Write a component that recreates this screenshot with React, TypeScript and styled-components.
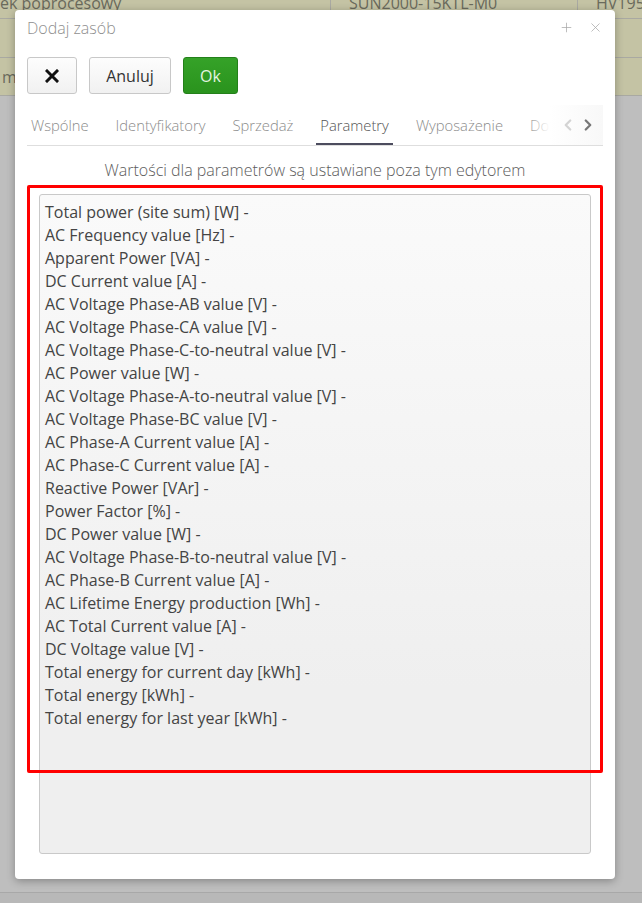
import React from "react";
import styled, { createGlobalStyle } from "styled-components";
import { ChevronLeft, ChevronRight, Plus, X } from "lucide-react";

const GlobalStyle = createGlobalStyle`
  html, body {
    margin: 0;
    height: 100%;
    overflow: hidden;
  }
  body {
    background: #bebebe;
    font-family: "Open Sans", "Liberation Sans", sans-serif;
  }
`;

const Page = styled.div`
  position: relative;
  width: 642px;
  height: 903px;
  overflow: hidden;
`;

const Backdrop = styled.div`
  display: flex;
  flex-direction: column;
  height: 100%;
`;

const Row = styled.div<{ $h: number; $tint?: boolean }>`
  display: flex;
  height: ${(p) => p.$h}px;
  background: ${(p) => (p.$tint ? "#c4c3a4" : "#bebebe")};
  border-bottom: 1px solid #a9a9a2;
  overflow: hidden;
  flex-shrink: 0;
`;

const Cell = styled.div<{ $w?: number; $shift?: number }>`
  box-sizing: border-box;
  width: ${(p) => (p.$w ? `${p.$w}px` : "auto")};
  flex: ${(p) => (p.$w ? "none" : 1)};
  padding: 0 2px 0 ${(p) => (p.$shift ?? 18)}px;
  margin-top: -8px;
  font-size: 16px;
  line-height: 22px;
  color: #6a6a5c;
  white-space: nowrap;
  border-right: 1px solid #a9a9a2;
  &:last-child {
    border-right: none;
  }
`;

const MidCell = styled(Cell)`
  margin-top: 0;
  align-self: center;
`;

const Filler = styled.div`
  flex: 1;
  border-bottom: 1px solid #a8a8a8;
`;

const Footer = styled.div`
  height: 10px;
  background: #b8b8b8;
`;

const Modal = styled.div`
  position: absolute;
  left: 15px;
  top: 10px;
  width: 600px;
  height: 869px;
  background: #fff;
  border-radius: 4px;
  box-shadow: 0 2px 8px rgba(0, 0, 0, 0.3);
  display: flex;
  flex-direction: column;
  padding: 0 12px;
  box-sizing: border-box;
`;

const Header = styled.div`
  display: flex;
  align-items: center;
  height: 35px;
`;

const Title = styled.div`
  flex: 1;
  font-size: 16px;
  font-weight: 300;
  color: #8f8f8f;
`;

const HeaderIcon = styled.span`
  display: flex;
  color: #a8a8a8;
  margin-left: 14px;
`;

const Toolbar = styled.div`
  display: flex;
  gap: 12px;
  height: 37px;
  margin-top: 12px;
`;

const Button = styled.button<{ $primary?: boolean; $w: number }>`
  width: ${(p) => p.$w}px;
  height: 37px;
  display: flex;
  align-items: center;
  justify-content: center;
  border-radius: 3px;
  font-family: inherit;
  font-size: 16px;
  cursor: pointer;
  border: 1px solid ${(p) => (p.$primary ? "#24801a" : "#c8c8c8")};
  background: ${(p) =>
    p.$primary
      ? "linear-gradient(#35a228, #2a931d)"
      : "linear-gradient(#fdfdfd, #f1f1f1)"};
  color: ${(p) => (p.$primary ? "#e4f4e0" : "#333")};
`;

const Tabs = styled.div`
  position: relative;
  display: flex;
  margin-top: 11px;
  height: 40px;
  border-bottom: 1px solid #dedede;
  overflow: hidden;
`;

const Tab = styled.div<{ $active?: boolean }>`
  flex: none;
  display: flex;
  align-items: center;
  padding: 2px 4px 0;
  margin-right: 19px;
  font-size: 14.75px;
  font-weight: 300;
  color: ${(p) => (p.$active ? "#555" : "#8c8c8c")};
  border-bottom: 2px solid ${(p) => (p.$active ? "#4c4c5e" : "transparent")};
`;

const TabArrows = styled.div`
  position: absolute;
  right: 0;
  top: 0;
  bottom: 0;
  width: 70px;
  display: flex;
  align-items: center;
  justify-content: flex-end;
  padding-right: 6px;
  gap: 2px;
  background: linear-gradient(to right, rgba(255, 255, 255, 0), #fff 30%, #f8f8f8);
`;

const Arrow = styled.span<{ $dim?: boolean }>`
  display: flex;
  color: ${(p) => (p.$dim ? "#d4d4d4" : "#777")};
`;

const Note = styled.div`
  margin-top: 13px;
  text-align: center;
  font-size: 16px;
  font-weight: 300;
  color: #5c5c5c;
  line-height: 22px;
`;

const Content = styled.div`
  position: relative;
  margin-top: 13px;
  padding: 0 12px;
`;

const TextArea = styled.div`
  height: 660px;
  box-sizing: border-box;
  border: 1px solid #c9c9c9;
  border-radius: 3px;
  background: linear-gradient(#fafafa, #efefef 75%);
  padding: 6px 5px;
`;

const Line = styled.div`
  font-size: 16px;
  line-height: 23px;
  color: #444;
  white-space: nowrap;
`;

const Highlight = styled.div`
  position: absolute;
  left: 0;
  right: 0;
  top: -9px;
  height: 588px;
  box-sizing: border-box;
  border: 3px solid #ff0000;
  border-radius: 2px;
  pointer-events: none;
`;

const params = [
  "Total power (site sum) [W] -",
  "AC Frequency value [Hz] -",
  "Apparent Power [VA] -",
  "DC Current value [A] -",
  "AC Voltage Phase-AB value [V] -",
  "AC Voltage Phase-CA value [V] -",
  "AC Voltage Phase-C-to-neutral value [V] -",
  "AC Power value [W] -",
  "AC Voltage Phase-A-to-neutral value [V] -",
  "AC Voltage Phase-BC value [V] -",
  "AC Phase-A Current value [A] -",
  "AC Phase-C Current value [A] -",
  "Reactive Power [VAr] -",
  "Power Factor [%] -",
  "DC Power value [W] -",
  "AC Voltage Phase-B-to-neutral value [V] -",
  "AC Phase-B Current value [A] -",
  "AC Lifetime Energy production [Wh] -",
  "AC Total Current value [A] -",
  "DC Voltage value [V] -",
  "Total energy for current day [kWh] -",
  "Total energy [kWh] -",
  "Total energy for last year [kWh] -",
];

const tabs = ["Wspólne", "Identyfikatory", "Sprzedaż", "Parametry", "Wyposażenie", "Do"];

const BoldX = () => (
  <svg width="14" height="14" viewBox="0 0 14 14">
    <path d="M2 2 L12 12 M12 2 L2 12" stroke="#111" strokeWidth="3" strokeLinecap="square" />
  </svg>
);

export default function App() {
  return (
    <Page>
      <GlobalStyle />
      <Backdrop>
        <Row $h={18} $tint>
          <Cell $w={331} $shift={0}>ek poprocesowy</Cell>
          <Cell $w={247}>SUN2000-15KTL-M0</Cell>
          <Cell>HV1950</Cell>
        </Row>
        <Row $h={38} $tint>
          <MidCell $w={331} $shift={0}></MidCell>
          <MidCell $w={247}></MidCell>
          <MidCell></MidCell>
        </Row>
        <Row $h={37} $tint>
          <MidCell $w={331} $shift={2}>m</MidCell>
          <MidCell $w={247}></MidCell>
          <MidCell></MidCell>
        </Row>
        <Filler />
        <Footer />
      </Backdrop>

      <Modal>
        <Header>
          <Title>Dodaj zasób</Title>
          <HeaderIcon>
            <Plus size={15} strokeWidth={1.2} />
          </HeaderIcon>
          <HeaderIcon>
            <X size={15} strokeWidth={1.2} />
          </HeaderIcon>
        </Header>

        <Toolbar>
          <Button $w={50}>
            <BoldX />
          </Button>
          <Button $w={82}>Anuluj</Button>
          <Button $w={55} $primary>
            Ok
          </Button>
        </Toolbar>

        <Tabs>
          {tabs.map((t) => (
            <Tab key={t} $active={t === "Parametry"}>
              {t}
            </Tab>
          ))}
          <TabArrows>
            <Arrow $dim>
              <ChevronLeft size={18} strokeWidth={3} />
            </Arrow>
            <Arrow>
              <ChevronRight size={18} strokeWidth={3} />
            </Arrow>
          </TabArrows>
        </Tabs>

        <Note>Wartości dla parametrów są ustawiane poza tym edytorem</Note>

        <Content>
          <TextArea>
            {params.map((p) => (
              <Line key={p}>{p}</Line>
            ))}
          </TextArea>
          <Highlight />
        </Content>
      </Modal>
    </Page>
  );
}
